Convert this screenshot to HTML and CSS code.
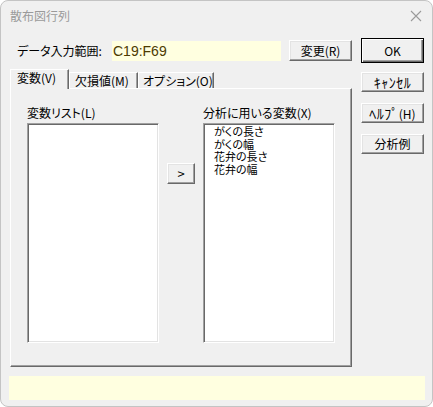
FILE: index.html
```html
<!DOCTYPE html>
<html lang="ja">
<head>
  <meta charset="UTF-8" />
  <title>散布図行列</title>
  <link rel="stylesheet" href="styles.css">
</head>
<body>
  <div class="dialog">
    <div class="titlebar">
      <span class="title">散布図行列</span>
      <svg class="close" width="12" height="12" viewBox="0 0 12 12">
        <path d="M1 1 L11 11 M11 1 L1 11" stroke="#9a9a9a" stroke-width="1.1" fill="none" />
      </svg>
    </div>

    <div class="body">
      <div class="left-col">
        <div class="range-row">
          <span class="range-label">データ入力範囲:</span>
          <div class="range-input">C19:F69</div>
          <button class="btn btn-change">変更(R)</button>
        </div>

        <div class="tabs">
          <div class="tab active">変数(V)</div>
          <div class="tab tab-missing">欠損値(M)</div>
          <div class="tab tab-option">オプション(O)</div>
        </div>

        <div class="panel">
          <div class="list-col">
            <div class="list-label">変数リスト(L)</div>
            <div class="listbox"></div>
          </div>
          <button class="btn btn-arrow">&gt;</button>
          <div class="list-col">
            <div class="list-label">分析に用いる変数(X)</div>
            <div class="listbox">
              <div class="item">がくの長さ</div>
              <div class="item">がくの幅</div>
              <div class="item">花弁の長さ</div>
              <div class="item">花弁の幅</div>
            </div>
          </div>
        </div>
      </div>

      <div class="side-col">
        <button class="btn btn-ok">OK</button>
        <button class="btn btn-side"><span class="kana">ｷｬﾝｾﾙ</span></button>
        <button class="btn btn-side"><span class="kana">ﾍﾙﾌﾟ</span>(H)</button>
        <button class="btn btn-side">分析例</button>
      </div>
    </div>

    <div class="status"></div>
  </div>
</body>
</html>
```

FILE: styles.css
```css
* {
  box-sizing: border-box;
}

body {
  margin: 0;
  background: #ffffff;
  font-family: "Noto Sans CJK JP", "Noto Sans", sans-serif;
  font-size: 12px;
  font-feature-settings: "palt";
  color: #000;
}

.dialog {
  width: 433px;
  height: 407px;
  background: #f0f0f0;
  border: 1px solid #c4c4c4;
  border-radius: 8px;
  overflow: hidden;
  display: flex;
  flex-direction: column;
}

.titlebar {
  height: 30px;
  display: flex;
  align-items: center;
  justify-content: space-between;
  padding: 0 10px 0 9px;
}

.title {
  color: #9a9a9a;
  font-size: 12px;
  line-height: 14px;
  font-feature-settings: normal;
}

.body {
  display: flex;
  gap: 9px;
  padding: 7px 8px 0 9px;
}

.left-col {
  width: 342px;
  display: flex;
  flex-direction: column;
}

/* データ入力範囲 */
.range-row {
  height: 25px;
  display: flex;
  align-items: center;
  padding-left: 7px;
}

.range-label {
  width: 95px;
  line-height: 14px;
  white-space: nowrap;
}

.range-input {
  width: 169px;
  height: 20px;
  background: #ffffe0;
  color: #4d3b00;
  font-family: "Liberation Sans", Arial, sans-serif;
  font-size: 14px;
  line-height: 20px;
  padding-left: 1px;
}

.btn {
  font-family: "Noto Sans CJK JP", "Noto Sans", sans-serif;
  font-size: 12px;
  font-feature-settings: "palt";
  line-height: 14px;
  color: #000;
  background: #f0f0f0;
  border: 1px solid;
  border-color: #ffffff #696969 #696969 #ffffff;
  box-shadow: inset -1px -1px #a0a0a0, inset 1px 1px #e3e3e3;
  padding: 0;
  margin: 0;
  white-space: nowrap;
}

.btn-change {
  width: 63px;
  height: 21px;
  margin-left: auto;
}

/* タブ */
.tabs {
  margin-top: 6px;
  height: 19px;
  display: flex;
  align-items: flex-end;
}

.tab {
  height: 16px;
  line-height: 15px;
  padding-left: 4px;
  white-space: nowrap;
  border-top: 1px solid #ffffff;
  border-left: 1px solid #ffffff;
  border-right: 1px solid #696969;
  box-shadow: inset -1px 0 #a0a0a0;
  background: #f0f0f0;
}

.tab.active {
  position: relative;
  z-index: 1;
  width: 59px;
  height: 20px;
  margin-bottom: -1px;
  padding-left: 6px;
  line-height: 16px;
}

.tab-missing {
  width: 69px;
  padding-left: 5px;
}

.tab-option {
  width: 76px;
}

.panel {
  height: 279px;
  border-top: 1px solid #ffffff;
  border-left: 1px solid #ffffff;
  border-right: 1px solid #696969;
  border-bottom: 1px solid #696969;
  box-shadow: inset -1px -1px #a0a0a0;
  display: flex;
  align-items: flex-start;
  gap: 8px;
  padding: 16px 0 0 16px;
}

.list-col {
  width: 132px;
}

.list-label {
  height: 18px;
  line-height: 14px;
  padding-top: 1px;
  white-space: nowrap;
}

.listbox {
  height: 220px;
  background: #ffffff;
  border-top: 1px solid #a0a0a0;
  border-left: 1px solid #a0a0a0;
  border-right: 1px solid #ffffff;
  border-bottom: 1px solid #ffffff;
  box-shadow: inset 1px 1px #696969, inset -1px -1px #e3e3e3;
  padding: 1px 0 0 10px;
  overflow: hidden;
}

.item {
  font-size: 11px;
  line-height: 12.5px;
  white-space: nowrap;
}

.btn-arrow {
  width: 28px;
  height: 21px;
  margin-top: 58px;
  font-size: 13px;
}

/* 右側のボタン */
.side-col {
  width: 63px;
  display: flex;
  flex-direction: column;
  gap: 11px;
}

.btn-ok {
  height: 25px;
  border: 1px solid #000000;
  box-shadow: inset 1px 1px #ffffff, inset -1px -1px #696969, inset -2px -2px #a0a0a0;
  margin-bottom: -2px;
}

.btn-side {
  height: 20px;
}

.kana {
  font-size: 14px;
  font-feature-settings: normal;
  letter-spacing: 0.5px;
}

.status {
  margin: 9px 7px 0 8px;
  height: 24px;
  background: #ffffe0;
}
```
